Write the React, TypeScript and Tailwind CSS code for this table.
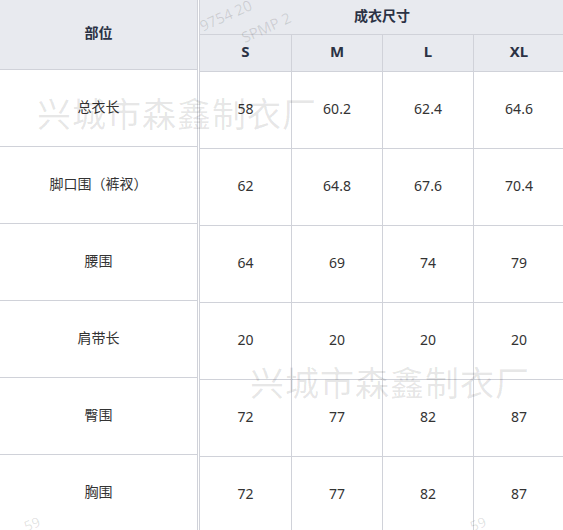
import React from 'react';

const sizes = ['S', 'M', 'L', 'XL'];

const rows: { name: string; values: string[] }[] = [
  { name: '总衣长', values: ['58', '60.2', '62.4', '64.6'] },
  { name: '脚口围（裤衩）', values: ['62', '64.8', '67.6', '70.4'] },
  { name: '腰围', values: ['64', '69', '74', '79'] },
  { name: '肩带长', values: ['20', '20', '20', '20'] },
  { name: '臀围', values: ['72', '77', '82', '87'] },
  { name: '胸围', values: ['72', '77', '82', '87'] },
];

const font = { fontFamily: '"Noto Sans", "Noto Sans CJK SC", sans-serif' };

export default function App() {
  return (
    <div className="relative w-[563px] h-[530px] overflow-hidden bg-white text-[14px]" style={font}>
      <div className="flex">
        {/* left: part names */}
        <div className="w-[198px] shrink-0 border-r border-[#d0d2d9]">
          <div className="h-[70px] pb-[5px] flex items-center justify-center bg-[#e8eaef] border-b border-[#d0d2d9] font-bold text-[#2b3244]">
            部位
          </div>
          {rows.map((r) => (
            <div key={r.name} className="h-[77px] pb-[4px] flex items-center justify-center border-b border-[#d0d2d9] text-[#333]">
              {r.name}
            </div>
          ))}
        </div>

        {/* right: sizes */}
        <div className="ml-px shrink-0">
          <div className="h-[35px] pb-[3px] w-[365px] flex items-center justify-center bg-[#e8eaef] border-l border-b border-[#d0d2d9] font-bold text-[#2b3244]">
            成衣尺寸
          </div>
          <div className="grid grid-cols-[92px_91px_91px_91px]">
            {sizes.map((s) => (
              <div key={s} className="h-[37px] pb-[3px] flex items-center justify-center bg-[#e8eaef] border-l border-b border-[#d0d2d9] font-bold text-[15px] text-[#2b3244]">
                {s}
              </div>
            ))}
            {rows.map((r) =>
              r.values.map((v, i) => (
                <div key={r.name + i} className="h-[77px] pb-[3px] flex items-center justify-center border-l border-b border-[#d0d2d9] text-[#333]">
                  {v}
                </div>
              ))
            )}
          </div>
        </div>
      </div>

      {/* watermarks */}
      <div className="absolute left-[37px] top-[97px] text-[34px] leading-none tracking-[1px] text-black/[0.1] pointer-events-none whitespace-nowrap">
        兴城市森鑫制衣厂
      </div>
      <div className="absolute left-[250px] top-[366px] text-[34px] leading-none tracking-[1px] text-black/[0.1] pointer-events-none whitespace-nowrap">
        兴城市森鑫制衣厂
      </div>
      <div className="absolute left-[198px] top-[8px] -rotate-[24deg] text-[15px] leading-none text-black/[0.12] pointer-events-none whitespace-nowrap">
        9754 20
      </div>
      <div className="absolute left-[240px] top-[20px] -rotate-[24deg] text-[15px] leading-none text-black/[0.12] pointer-events-none whitespace-nowrap">
        SPMP 2
      </div>
      <div className="absolute left-[24px] top-[517px] -rotate-[22deg] text-[14px] leading-none text-black/[0.12] pointer-events-none whitespace-nowrap">
        59
      </div>
      <div className="absolute left-[470px] top-[517px] -rotate-[22deg] text-[14px] leading-none text-black/[0.12] pointer-events-none whitespace-nowrap">
        59
      </div>
    </div>
  );
}
